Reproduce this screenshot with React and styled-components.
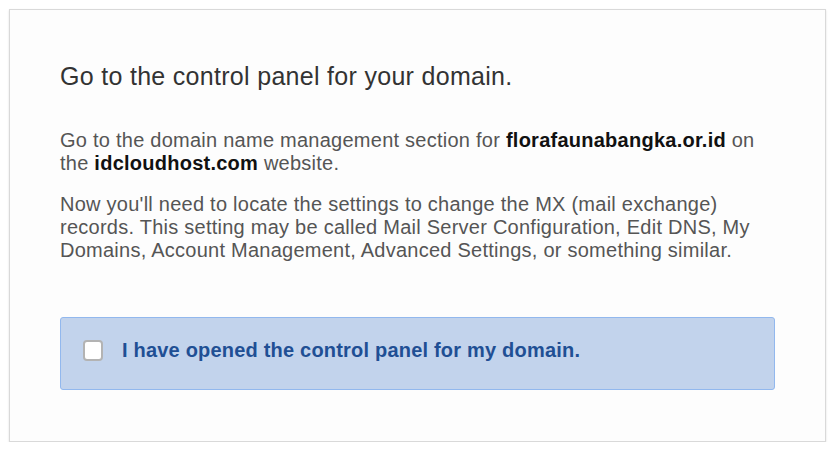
import React, { useState } from 'react';
import styled, { createGlobalStyle } from 'styled-components';

const GlobalStyle = createGlobalStyle`
  html, body {
    margin: 0;
    padding: 0;
    background: #ffffff;
  }
  body {
    font-family: "Liberation Sans", Arial, Helvetica, sans-serif;
  }
`;

const Page = styled.div`
  padding: 9px 0 0 9px;
`;

const Card = styled.div`
  box-sizing: border-box;
  width: 817px;
  height: 433px;
  background: #fdfdfd;
  border: 1px solid #d9d9d9;
  box-shadow: 0 1px 2px rgba(0, 0, 0, 0.12);
  padding: 51px 50px 0 50px;
`;

const Title = styled.h2`
  margin: 0;
  font-size: 25px;
  line-height: 30px;
  letter-spacing: 0.3px;
  font-weight: normal;
  color: #333333;
`;

const Text = styled.p`
  margin: ${p => p.$top}px 0 0 0;
  font-size: 20px;
  line-height: 23px;
  letter-spacing: 0.25px;
  color: #555555;

  b {
    color: #111111;
  }
`;

const Confirm = styled.label`
  box-sizing: border-box;
  display: flex;
  align-items: center;
  gap: 19px;
  height: 73px;
  margin-top: 55px;
  padding: 0 0 6px 22px;
  background: #c2d3ec;
  border: 1px solid #92b8ee;
  border-radius: 3px;
  cursor: pointer;
`;

const Box = styled.span`
  box-sizing: border-box;
  width: 20px;
  height: 21px;
  flex-shrink: 0;
  background: #ffffff;
  border: 2px solid #b3b3b3;
  border-radius: 4px;
  display: flex;
  align-items: center;
  justify-content: center;
`;

const Label = styled.span`
  font-size: 20px;
  letter-spacing: 0.2px;
  font-weight: bold;
  color: #1f4f94;
`;

export default function App() {
  const [checked, setChecked] = useState(false);

  return (
    <>
      <GlobalStyle />
      <Page>
        <Card>
          <Title>Go to the control panel for your domain.</Title>
          <Text $top={38}>
            Go to the domain name management section for <b>florafaunabangka.or.id</b> on
            the <b>idcloudhost.com</b> website.
          </Text>
          <Text $top={18}>
            Now you'll need to locate the settings to change the MX (mail exchange)
            records. This setting may be called Mail Server Configuration, Edit DNS, My
            Domains, Account Management, Advanced Settings, or something similar.
          </Text>
          <Confirm onClick={() => setChecked(!checked)}>
            <Box>
              {checked && (
                <svg width="12" height="12" viewBox="0 0 12 12">
                  <path d="M2 6l3 3 5-6" fill="none" stroke="#1f4f94" strokeWidth="2" />
                </svg>
              )}
            </Box>
            <Label>I have opened the control panel for my domain.</Label>
          </Confirm>
        </Card>
      </Page>
    </>
  );
}
